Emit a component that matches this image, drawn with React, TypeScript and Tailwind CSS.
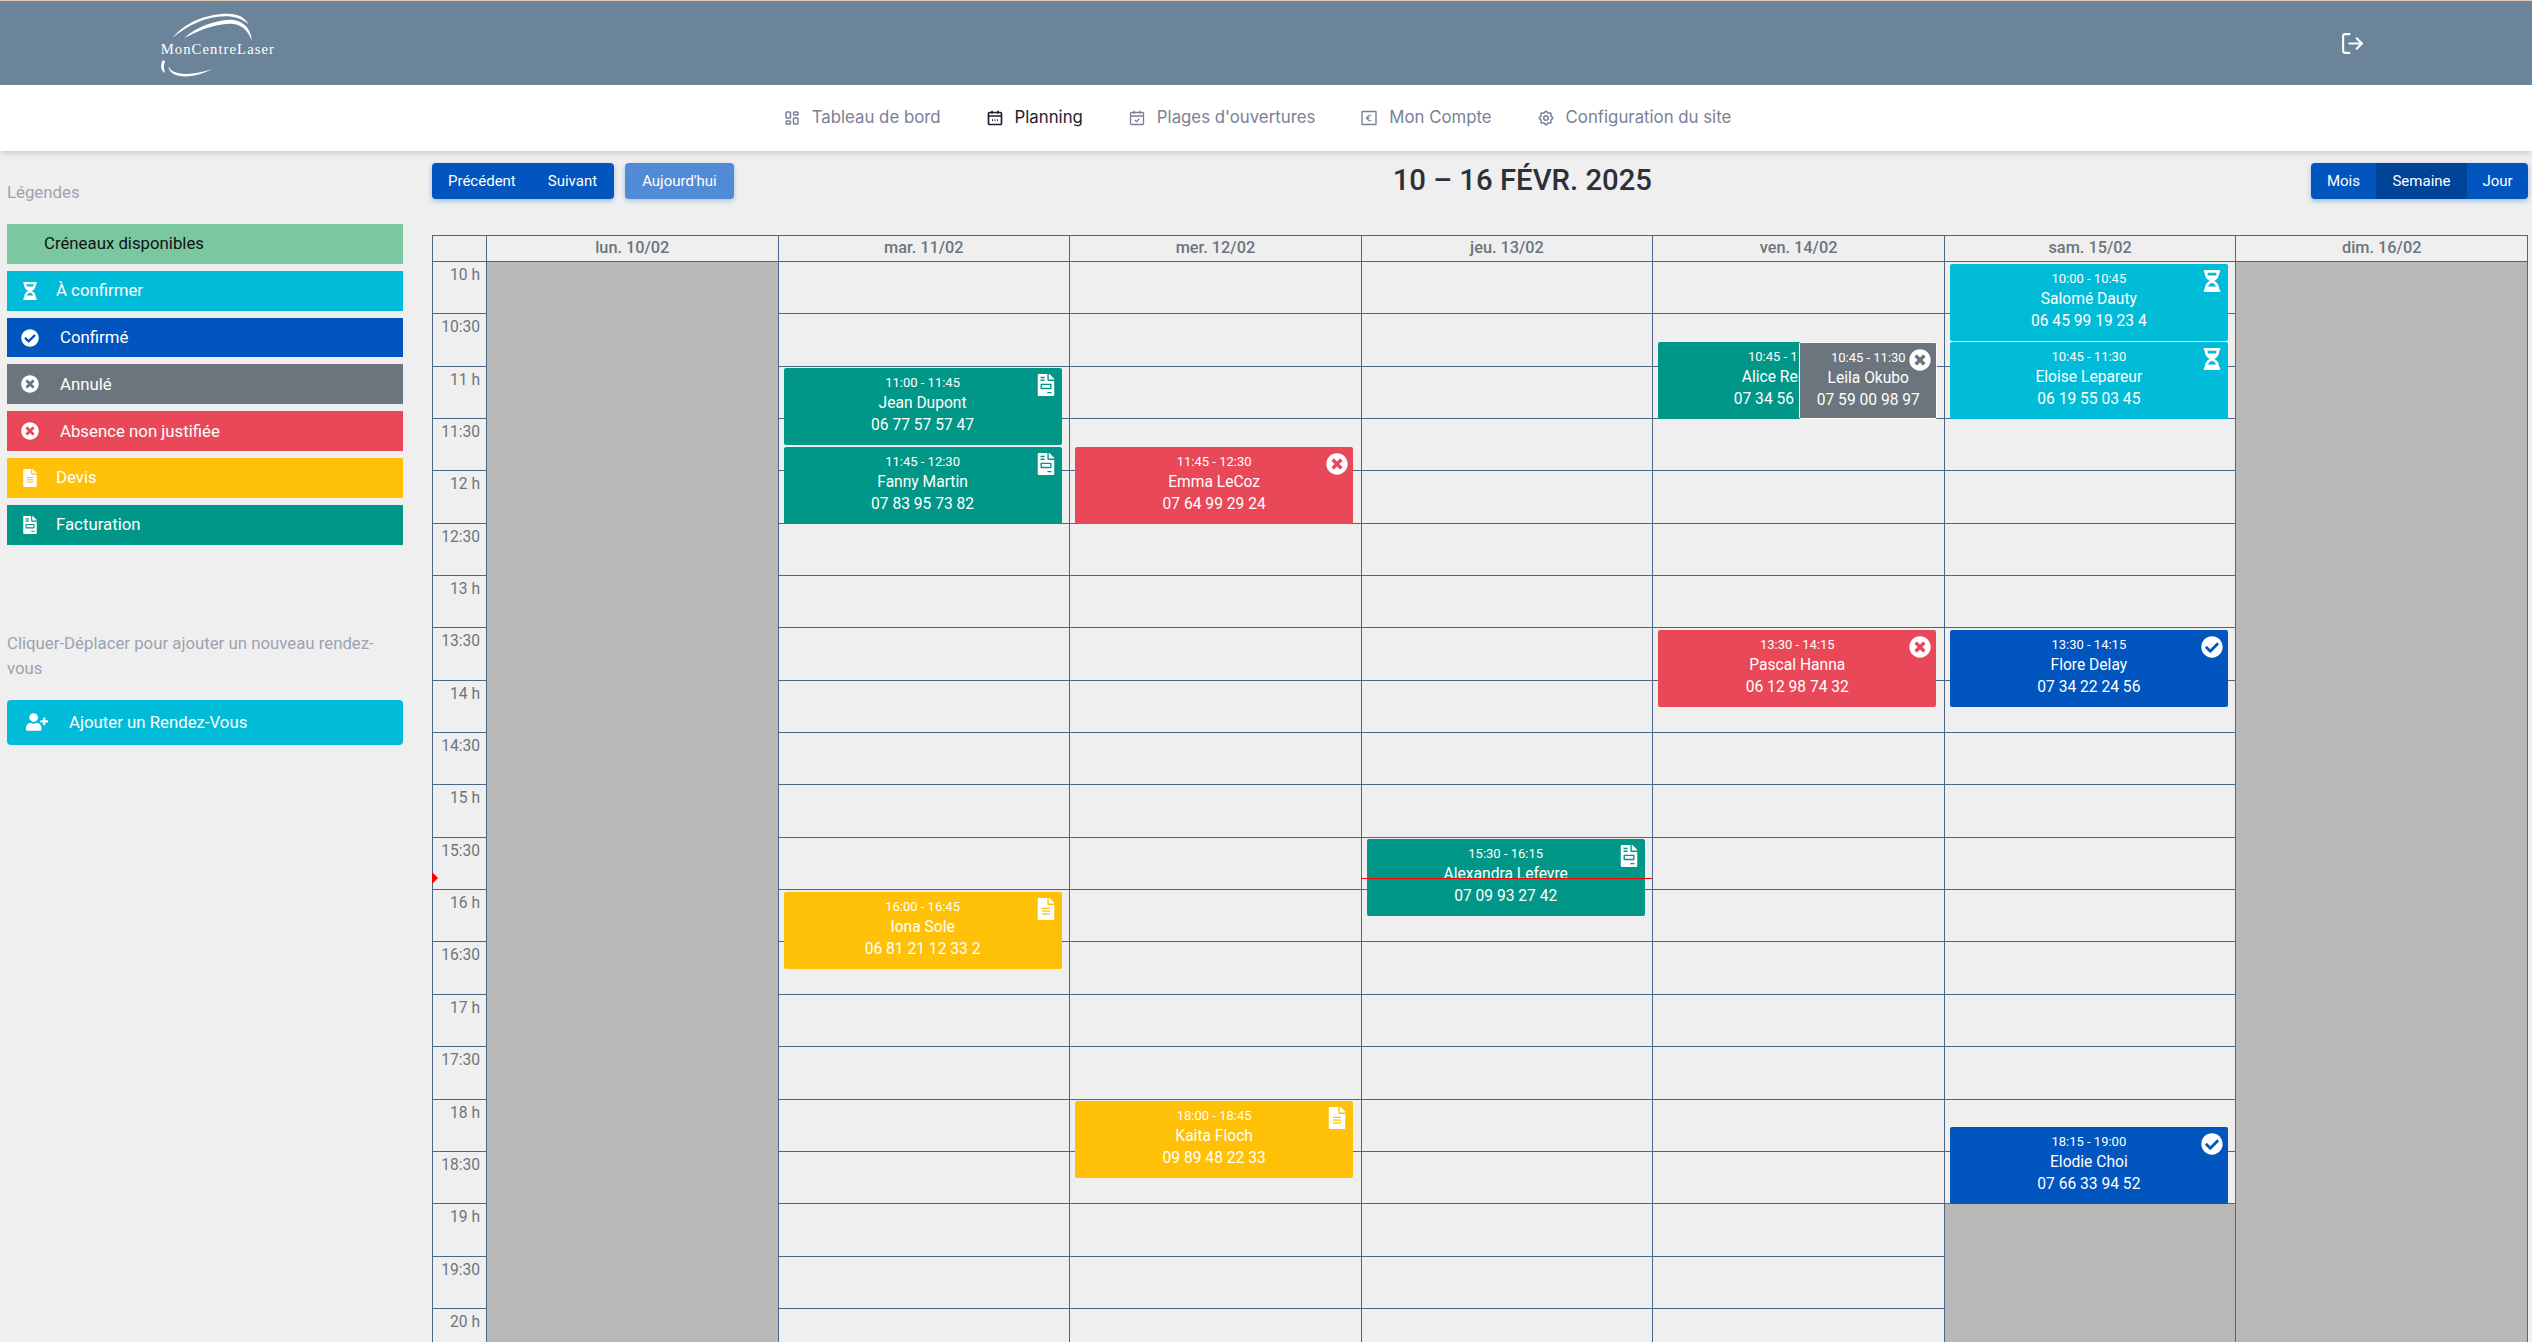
import { LogOut } from "lucide-react";
import {
  FaCheckCircle,
  FaFileAlt,
  FaFileInvoice,
  FaHourglassHalf,
  FaTimesCircle,
  FaUserPlus,
} from "react-icons/fa";
import { TbLayoutDashboard, TbSettings } from "react-icons/tb";
import type { ReactNode } from "react";

const SLOT = 52.35;

type Kind = "pending" | "confirmed" | "cancelled" | "absent" | "quote" | "invoice";

interface CalEvent {
  day: number;
  start: number;
  time: string;
  name: string;
  phone: string;
  kind: Kind;
  left?: number;
  width?: number;
  outlined?: boolean;
}

const KIND_BG: Record<Kind, string> = {
  pending: "bg-[#00bcd8]",
  confirmed: "bg-[#0055bf]",
  cancelled: "bg-[#6c757d]",
  absent: "bg-[#e84858]",
  quote: "bg-[#ffc107]",
  invoice: "bg-[#009688]",
};

const KIND_ICON: Record<Kind, ReactNode> = {
  pending: <FaHourglassHalf size={22} />,
  confirmed: <FaCheckCircle size={22} />,
  cancelled: <FaTimesCircle size={22} />,
  absent: <FaTimesCircle size={22} />,
  quote: <FaFileAlt size={22} />,
  invoice: <FaFileInvoice size={22} />,
};

const EVENTS: CalEvent[] = [
  { day: 1, start: 11, time: "11:00 - 11:45", name: "Jean Dupont", phone: "06 77 57 57 47", kind: "invoice" },
  { day: 1, start: 11.75, time: "11:45 - 12:30", name: "Fanny Martin", phone: "07 83 95 73 82", kind: "invoice" },
  { day: 1, start: 16, time: "16:00 - 16:45", name: "Iona Sole", phone: "06 81 21 12 33 2", kind: "quote" },
  { day: 2, start: 11.75, time: "11:45 - 12:30", name: "Emma LeCoz", phone: "07 64 99 29 24", kind: "absent" },
  { day: 2, start: 18, time: "18:00 - 18:45", name: "Kaita Floch", phone: "09 89 48 22 33", kind: "quote" },
  { day: 3, start: 15.5, time: "15:30 - 16:15", name: "Alexandra Lefevre", phone: "07 09 93 27 42", kind: "invoice" },
  { day: 4, start: 10.75, time: "10:45 - 11:30", name: "Alice Renard", phone: "07 34 56 12 89", kind: "invoice", width: 254 },
  { day: 4, start: 10.75, time: "10:45 - 11:30", name: "Leila Okubo", phone: "07 59 00 98 97", kind: "cancelled", left: 146, width: 138, outlined: true },
  { day: 4, start: 13.5, time: "13:30 - 14:15", name: "Pascal Hanna", phone: "06 12 98 74 32", kind: "absent" },
  { day: 5, start: 10, time: "10:00 - 10:45", name: "Salomé Dauty", phone: "06 45 99 19 23 4", kind: "pending" },
  { day: 5, start: 10.75, time: "10:45 - 11:30", name: "Eloise Lepareur", phone: "06 19 55 03 45", kind: "pending" },
  { day: 5, start: 13.5, time: "13:30 - 14:15", name: "Flore Delay", phone: "07 34 22 24 56", kind: "confirmed" },
  { day: 5, start: 18.25, time: "18:15 - 19:00", name: "Elodie Choi", phone: "07 66 33 94 52", kind: "confirmed" },
];

const DAYS = ["lun. 10/02", "mar. 11/02", "mer. 12/02", "jeu. 13/02", "ven. 14/02", "sam. 15/02", "dim. 16/02"];

const SLOT_LABELS = Array.from({ length: 22 }, (_, i) => {
  const hour = 10 + Math.floor(i / 2);
  return i % 2 === 0 ? `${hour} h` : `${hour}:30`;
});

const LEGEND = [
  { label: "À confirmer", kind: "pending" as Kind, pad: "pl-[49px]" },
  { label: "Confirmé", kind: "confirmed" as Kind, pad: "pl-[53px]" },
  { label: "Annulé", kind: "cancelled" as Kind, pad: "pl-[53px]" },
  { label: "Absence non justifiée", kind: "absent" as Kind, pad: "pl-[53px]" },
  { label: "Devis", kind: "quote" as Kind, pad: "pl-[49px]" },
  { label: "Facturation", kind: "invoice" as Kind, pad: "pl-[49px]" },
];

function Logo() {
  return (
    <svg viewBox="0 0 420 255" width={140} height={85} className="ml-[150px] block shrink-0">
      <path d="M68 110 C100 70 160 38 235 38 C262 38 285 48 296 70 C275 52 250 46 225 46 C165 46 110 76 68 110Z" fill="#fff" />
      <path d="M102 112 C135 80 190 58 240 56 C280 56 305 85 305 120 C295 85 270 68 240 68 C190 70 140 90 102 112Z" fill="#fff" />
      <text x="32" y="160" fill="#fff" fontSize="44" fontFamily="'Liberation Serif', serif" textLength="340">
        MonCentreLaser
      </text>
      <path d="M38 178 C30 195 32 210 46 216 C40 204 40 190 46 180Z" fill="#fff" />
      <path d="M56 196 C54 226 112 242 186 205 C140 220 88 226 62 206Z" fill="#fff" />
    </svg>
  );
}

function CalendarIcon({ active, check }: { active?: boolean; check?: boolean }) {
  return (
    <svg viewBox="0 0 18 18" width={18} height={18} fill="none" stroke="currentColor" strokeWidth={active ? 1.7 : 1.3}>
      <rect x="2.5" y="3.5" width="13" height="12" rx="1" />
      <path d="M2.5 7h13M6 1.8v3M12 1.8v3" />
      {check ? (
        <path d="M6.8 11l1.7 1.6 3-3" />
      ) : (
        <path d="M6 11.2h1M8.5 11.2h1M11 11.2h1" />
      )}
    </svg>
  );
}

function AccountIcon() {
  return (
    <svg viewBox="0 0 18 18" width={18} height={18} fill="none" stroke="currentColor" strokeWidth={1.4}>
      <rect x="2" y="2.5" width="14" height="13" rx="0.5" />
      <path d="M11.2 6.6C9 5.6 7.4 7 7.4 9s1.6 3.4 3.8 2.4M6 8.3h3.4M6 9.8h3.4" strokeWidth={1.1} />
    </svg>
  );
}

function NavItem({ icon, label, active }: { icon: ReactNode; label: string; active?: boolean }) {
  return (
    <div className={`flex items-center gap-[11px] ${active ? "text-[#1c2230]" : "text-[#7a8096]"}`}>
      {icon}
      <span className="text-[16.8px]">{label}</span>
    </div>
  );
}

function Event({ ev }: { ev: CalEvent }) {
  const top = (ev.start - 10) * 2 * SLOT + 1.5;
  return (
    <div
      className={`absolute z-10 flex h-[77px] flex-col items-center rounded-[2px] pt-[6px] text-white ${KIND_BG[ev.kind]} ${
        ev.outlined ? "z-20 border border-white" : ""
      }`}
      style={{ top, left: ev.left ?? 5, width: ev.width ?? 278 }}
    >
      <div className="text-[13px] leading-[18px]">{ev.time}</div>
      <div className="text-[15.6px] leading-[22px]">{ev.name}</div>
      <div className="text-[15.6px] leading-[22px]">{ev.phone}</div>
      <div className="absolute top-[6px] right-[5px]">{KIND_ICON[ev.kind]}</div>
    </div>
  );
}

export default function App() {
  return (
    <div className="relative h-screen overflow-hidden bg-[#efefef] [font-family:Roboto,sans-serif]">
      <header className="flex h-[85px] items-center justify-between border-t border-[#e2c9b6] bg-[#6b849a] pr-[167px] text-white">
        <Logo />
        <LogOut size={25} strokeWidth={2} />
      </header>

      <nav className="relative flex h-[66px] items-center justify-center gap-[45px] bg-white pr-[18px] shadow-md [font-family:Inter,sans-serif]">
        <NavItem icon={<TbLayoutDashboard size={18} />} label="Tableau de bord" />
        <NavItem icon={<CalendarIcon active />} label="Planning" active />
        <NavItem icon={<CalendarIcon check />} label="Plages d'ouvertures" />
        <NavItem icon={<AccountIcon />} label="Mon Compte" />
        <NavItem icon={<TbSettings size={18} />} label="Configuration du site" />
      </nav>

      <main className="flex items-start pr-[4px] pl-[7px]">
        {/* Sidebar */}
        <aside className="w-[396px] shrink-0">
          <p className="mt-[29px] text-[16.8px] leading-[24px] text-[#9ca3af]">Légendes</p>
          <div className="mt-[20px] flex flex-col gap-[7px]">
            <div className="flex h-[39.83px] items-center bg-[#7bc8a0] pl-[37px] text-[16.8px] text-[#111]">
              Créneaux disponibles
            </div>
            {LEGEND.map((item) => (
              <div
                key={item.label}
                className={`relative flex h-[39.83px] items-center text-[16.8px] text-white ${KIND_BG[item.kind]} ${item.pad}`}
              >
                <span className="absolute top-[11px] left-[14px] [&_svg]:h-[18px] [&_svg]:w-[18px]">
                  {KIND_ICON[item.kind]}
                </span>
                {item.label}
              </div>
            ))}
          </div>
          <p className="mt-[86px] text-[16.8px] leading-[25px] text-[#9ca3af]">
            Cliquer-Déplacer pour ajouter un nouveau rendez-vous
          </p>
          <button className="mt-[19px] flex h-[45px] w-full items-center gap-[21px] rounded-[4px] bg-[#00bcd8] pl-[19px] text-[16.8px] text-white">
            <FaUserPlus size={22} />
            Ajouter un Rendez-Vous
          </button>
        </aside>

        {/* Calendar */}
        <section className="ml-[29px] w-[2096px] shrink-0">
          <div className="mt-[12px] flex h-[36px] items-center justify-between">
            <div className="flex gap-[11px]">
              <div className="flex h-[36px] items-center gap-[32px] rounded-[4px] bg-[#0055bf] pr-[17px] pl-[16px] text-[15px] text-white shadow-[0_2px_5px_rgba(0,85,191,0.35)]">
                <span>Précédent</span>
                <span>Suivant</span>
              </div>
              <div className="flex h-[36px] items-center rounded-[4px] bg-[#528bd5] px-[17px] text-[15px] text-white shadow-[0_2px_5px_rgba(0,85,191,0.3)]">
                Aujourd'hui
              </div>
            </div>
            <h1 className="text-[29.3px] font-medium text-[#2c3038]">10 – 16 FÉVR. 2025</h1>
            <div className="flex h-[36px] overflow-hidden rounded-[4px] bg-[#0055bf] text-[15px] text-white shadow-[0_2px_5px_rgba(0,85,191,0.35)]">
              <span className="flex w-[65px] items-center justify-center">Mois</span>
              <span className="flex w-[91px] items-center justify-center bg-[#00449a]">Semaine</span>
              <span className="flex w-[61px] items-center justify-center">Jour</span>
            </div>
          </div>

          <div className="mt-[36px] grid grid-cols-[54px_repeat(7,1fr)] border-t border-l border-[#4a6688]">
            <div className="h-[26px] border-r border-b border-[#4a6688]" />
            {DAYS.map((day) => (
              <div
                key={day}
                className="flex h-[26px] items-center justify-center border-r border-b border-[#4a6688] text-[16.3px] font-medium text-[#6c757d]"
              >
                {day}
              </div>
            ))}

            <div className="border-r border-[#4a6688]">
              {SLOT_LABELS.map((label) => (
                <div
                  key={label}
                  className="h-[52.35px] border-b border-[#4a6688] pt-[3px] pr-[6px] text-right text-[15.6px] leading-[20px] text-[#6c757d]"
                >
                  {label}
                </div>
              ))}
            </div>

            {DAYS.map((day, dayIdx) => (
              <div key={day} className="relative border-r border-[#4a6688]">
                {SLOT_LABELS.map((label) => (
                  <div key={label} className="h-[52.35px] border-b border-[#4a6688]" />
                ))}
                {(dayIdx === 0 || dayIdx === 6) && <div className="absolute inset-0 bg-[#bbb9b7]" />}
                {dayIdx === 5 && <div className="absolute inset-x-0 top-[942px] bottom-0 bg-[#bbb9b7]" />}
                {EVENTS.filter((ev) => ev.day === dayIdx).map((ev) => (
                  <Event key={ev.name} ev={ev} />
                ))}
                {dayIdx === 3 && <div className="absolute inset-x-0 top-[616px] z-30 h-px bg-[#f00]" />}
              </div>
            ))}
          </div>
        </section>
      </main>

      {/* now indicator arrow on the time axis */}
      <div className="absolute top-[872px] left-[432px] z-30 h-0 w-0 border-y-[6px] border-l-[6px] border-y-transparent border-l-[#f00]" />
    </div>
  );
}
